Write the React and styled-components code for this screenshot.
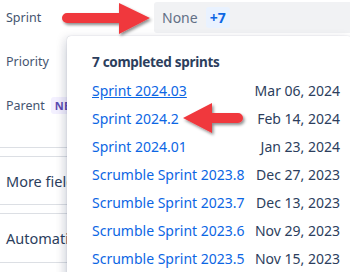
import React from "react";
import styled, { createGlobalStyle } from "styled-components";

const GlobalStyle = createGlobalStyle`
  html, body {
    margin: 0;
    padding: 0;
    background: #ffffff;
  }
  body {
    font-family: "Noto Sans", "Liberation Sans", sans-serif;
    overflow: hidden;
  }
`;

const Page = styled.div`
  position: relative;
  width: 350px;
  height: 272px;
  overflow: hidden;
  background: #ffffff;
`;

const Fields = styled.div`
  display: flex;
  flex-direction: column;
  gap: 12px;
  padding-top: 2px;
  padding-bottom: 26px;
  border-bottom: 1px solid #dcdfe4;
`;

const FieldRow = styled.div`
  display: grid;
  grid-template-columns: 154px 1fr;
  align-items: center;
  height: ${(p) => p.h || 32}px;
`;

const Label = styled.div`
  display: flex;
  align-items: center;
  gap: 6px;
  padding-left: 6px;
  font-size: 12.5px;
  color: #44546f;
`;

const NewBadge = styled.span`
  background: #f3f0ff;
  color: #5e4db2;
  font-size: 11px;
  font-weight: 700;
  padding: 1px 4px;
  border-radius: 3px;
  letter-spacing: 0.2px;
`;

const ValueBox = styled.div`
  display: flex;
  align-items: center;
  gap: 8px;
  height: 31px;
  padding-left: 8px;
  background: #f1f2f4;
  border-radius: 3px 0 0 3px;
  font-size: 14px;
  color: #626f86;
`;

const CountChip = styled.span`
  background: #e9f2ff;
  color: #0c66e4;
  font-weight: 700;
  font-size: 14px;
  padding: 1px 4px;
  border-radius: 3px;
`;

const Sections = styled.div`
  display: flex;
  flex-direction: column;
  gap: 8px;
  padding-top: 8px;
`;

const Section = styled.div`
  display: flex;
  align-items: center;
  height: ${(p) => p.h || 46}px;
  padding-left: 6px;
  border-top: 1px solid #dcdfe4;
  border-bottom: 1px solid #dcdfe4;
  font-size: 14.5px;
  font-weight: 400;
  color: #2c3e5d;
`;

const Menu = styled.div`
  position: absolute;
  left: 67px;
  top: 36px;
  width: 285px;
  height: 260px;
  box-sizing: border-box;
  padding: 14px 12px 0 25px;
  background: #ffffff;
  border-radius: 4px;
  box-shadow: 0 8px 12px rgba(9, 30, 66, 0.15), 0 0 1px rgba(9, 30, 66, 0.31),
    -4px 0 8px rgba(9, 30, 66, 0.08);
`;

const MenuTitle = styled.div`
  height: 24px;
  line-height: 24px;
  margin-bottom: 2px;
  font-size: 13.5px;
  font-weight: 700;
  letter-spacing: -0.3px;
  color: #2c3e5d;
`;

const SprintRow = styled.div`
  display: flex;
  align-items: center;
  justify-content: space-between;
  height: 28px;
  font-size: 14px;
`;

const SprintName = styled.span`
  color: #0c66e4;
  text-decoration: ${(p) => (p.hover ? "underline" : "none")};
`;

const SprintDate = styled.span`
  color: #2c3e5d;
`;

const ArrowLayer = styled.svg`
  position: absolute;
  left: 0;
  top: 0;
  pointer-events: none;
`;

const sprints = [
  ["Sprint 2024.03", "Mar 06, 2024", true],
  ["Sprint 2024.2", "Feb 14, 2024"],
  ["Sprint 2024.01", "Jan 23, 2024"],
  ["Scrumble Sprint 2023.8", "Dec 27, 2023"],
  ["Scrumble Sprint 2023.7", "Dec 13, 2023"],
  ["Scrumble Sprint 2023.6", "Nov 29, 2023"],
  ["Scrumble Sprint 2023.5", "Nov 15, 2023"],
];

function Arrows() {
  return (
    <ArrowLayer width="350" height="272" viewBox="0 0 350 272">
      <defs>
        <filter id="arrowShadow" x="-20%" y="-40%" width="150%" height="200%">
          <feDropShadow dx="1.5" dy="2" stdDeviation="1.6" floodColor="#000" floodOpacity="0.45" />
        </filter>
      </defs>
      <g filter="url(#arrowShadow)" fill="#f0393e">
        <path d="M67 13 H119 V3 L150 18 L119 34 V23 H67 A5 5 0 0 1 67 13 Z" />
        <path d="M238 113 H212 V103 L183 118 L212 133 V123 H238 A5 5 0 0 0 238 113 Z" />
      </g>
    </ArrowLayer>
  );
}

export default function App() {
  return (
    <Page>
      <GlobalStyle />
      <Fields>
        <FieldRow h={31}>
          <Label>Sprint</Label>
          <ValueBox>
            None
            <CountChip>+7</CountChip>
          </ValueBox>
        </FieldRow>
        <FieldRow>
          <Label>Priority</Label>
        </FieldRow>
        <FieldRow>
          <Label>
            Parent <NewBadge>NEW</NewBadge>
          </Label>
        </FieldRow>
      </Fields>
      <Sections>
        <Section h={47}>More fields</Section>
        <Section h={48}>Automation</Section>
      </Sections>
      <Menu>
        <MenuTitle>7 completed sprints</MenuTitle>
        {sprints.map(([name, date, hover]) => (
          <SprintRow key={name}>
            <SprintName hover={hover}>{name}</SprintName>
            <SprintDate>{date}</SprintDate>
          </SprintRow>
        ))}
      </Menu>
      <Arrows />
    </Page>
  );
}
